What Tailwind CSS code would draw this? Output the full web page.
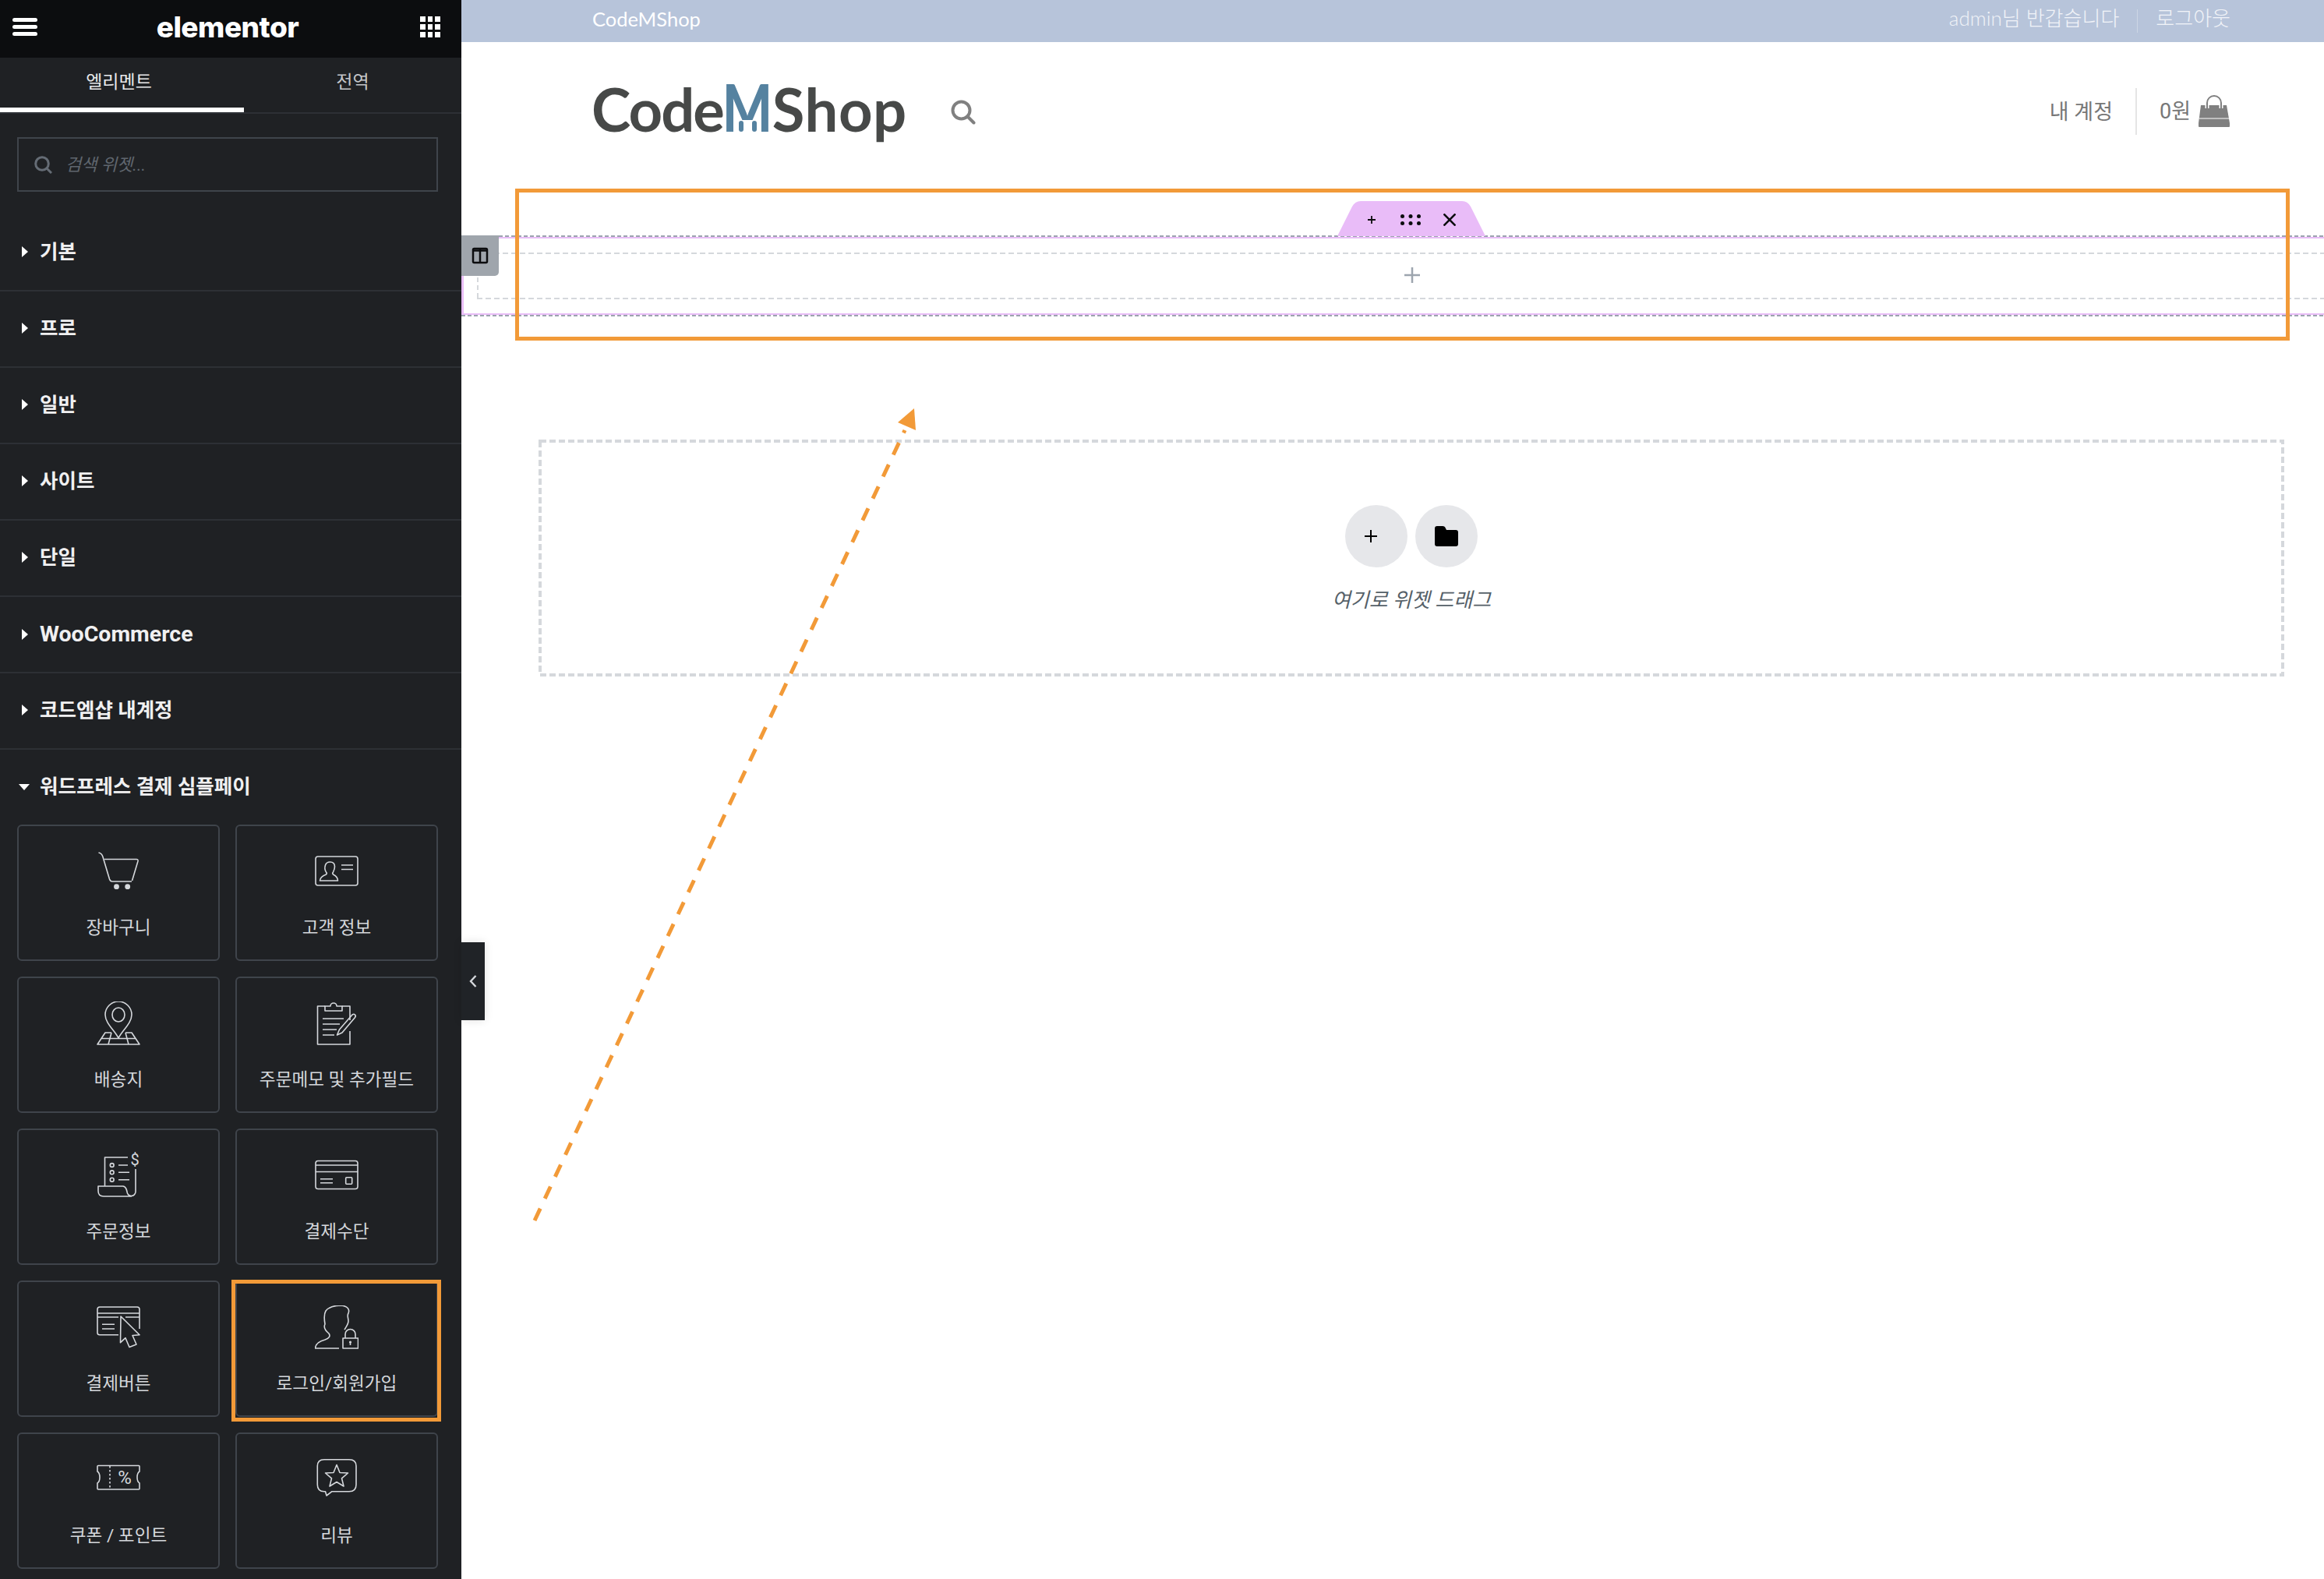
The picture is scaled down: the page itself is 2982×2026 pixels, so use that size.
<!DOCTYPE html>
<html lang="ko">
<head>
    <meta charset="UTF-8">
    <title>Elementor - CodeMShop</title>
    <script src="https://cdn.jsdelivr.net/npm/@tailwindcss/browser@4"></script>
</head>
<body class="h-[2026px] overflow-hidden bg-white font-['Roboto','Noto_Sans_CJK_KR',sans-serif]">
<div class="relative flex h-[2026px] w-[2982px] overflow-hidden">

    <!-- Editor panel -->
    <aside class="relative h-full w-[592px] shrink-0 bg-[#1f2124]">
        <div class="flex h-[74px] items-center justify-between bg-[#0c0d0f] pb-[5px] pl-[16px] pr-[27px]">
            <div class="flex w-[32px] flex-col gap-[4px]">
                <span class="h-[5px] rounded-full bg-white"></span>
                <span class="h-[5px] rounded-full bg-white"></span>
                <span class="h-[5px] rounded-full bg-white"></span>
            </div>
            <span class="-ml-[3px] font-['Inter'] text-[37px] font-extrabold leading-none tracking-[-0.5px] text-white">elementor</span>
            <div class="grid w-[26px] grid-cols-3 gap-[3px]">
                <span class="h-[7px] bg-white"></span><span class="h-[7px] bg-white"></span><span class="h-[7px] bg-white"></span>
                <span class="h-[7px] bg-white"></span><span class="h-[7px] bg-white"></span><span class="h-[7px] bg-white"></span>
                <span class="h-[7px] bg-white"></span><span class="h-[7px] bg-white"></span><span class="h-[7px] bg-white"></span>
            </div>
        </div>

        <div class="flex h-[72px] border-b-2 border-[#2d3035] text-[23px]">
            <div class="flex w-[313px] items-center justify-center border-b-[6px] border-white pr-[8px] text-[#e8e9ea]">엘리멘트</div>
            <div class="flex flex-1 items-center justify-center pb-[6px] text-[#c5c7ca]">전역</div>
        </div>

        <div class="ml-[22px] mt-[30px] flex h-[70px] w-[540px] items-center gap-[17px] border-2 border-[#3f444b] pl-[20px]">
            <svg class="h-[23px] w-[23px]" viewBox="0 0 23 23" fill="none" stroke="#656c75" stroke-width="3"><circle cx="10" cy="10" r="8.3"/><path d="M16 16l6 6"/></svg>
            <span class="text-[22px] italic text-[#5f666e]">검색 위젯...</span>
        </div>

        <div class="mt-[30px]">
            <div class="flex h-[98px] items-center gap-[15px] border-b-2 border-[#2d3035] pb-[2px] pl-[28px] text-[25.5px] font-bold text-[#f0f0f1]"><span class="h-0 w-0 border-y-[7px] border-l-[8px] border-y-transparent border-l-white"></span>기본</div>
            <div class="flex h-[98px] items-center gap-[15px] border-b-2 border-[#2d3035] pb-[2px] pl-[28px] text-[25.5px] font-bold text-[#f0f0f1]"><span class="h-0 w-0 border-y-[7px] border-l-[8px] border-y-transparent border-l-white"></span>프로</div>
            <div class="flex h-[98px] items-center gap-[15px] border-b-2 border-[#2d3035] pb-[2px] pl-[28px] text-[25.5px] font-bold text-[#f0f0f1]"><span class="h-0 w-0 border-y-[7px] border-l-[8px] border-y-transparent border-l-white"></span>일반</div>
            <div class="flex h-[98px] items-center gap-[15px] border-b-2 border-[#2d3035] pb-[2px] pl-[28px] text-[25.5px] font-bold text-[#f0f0f1]"><span class="h-0 w-0 border-y-[7px] border-l-[8px] border-y-transparent border-l-white"></span>사이트</div>
            <div class="flex h-[98px] items-center gap-[15px] border-b-2 border-[#2d3035] pb-[2px] pl-[28px] text-[25.5px] font-bold text-[#f0f0f1]"><span class="h-0 w-0 border-y-[7px] border-l-[8px] border-y-transparent border-l-white"></span>단일</div>
            <div class="flex h-[98px] items-center gap-[15px] border-b-2 border-[#2d3035] pl-[28px] text-[28.5px] font-bold text-[#f0f0f1]"><span class="h-0 w-0 border-y-[7px] border-l-[8px] border-y-transparent border-l-white"></span>WooCommerce</div>
            <div class="flex h-[98px] items-center gap-[15px] border-b-2 border-[#2d3035] pb-[2px] pl-[28px] text-[25.5px] font-bold text-[#f0f0f1]"><span class="h-0 w-0 border-y-[7px] border-l-[8px] border-y-transparent border-l-white"></span>코드엠샵 내계정</div>
            <div class="flex h-[96px] items-center gap-[13px] pb-[1px] pl-[24px] text-[25.5px] font-bold text-[#f0f0f1]"><span class="h-0 w-0 border-x-[7px] border-t-[8px] border-x-transparent border-t-white"></span>워드프레스 결제 심플페이</div>
        </div>

        <div class="ml-[22px] grid w-[540px] grid-cols-2 gap-x-[20px] gap-y-[20px] text-[22.6px] text-[#d5d8dc]">
            <div class="flex h-[175px] flex-col items-center rounded-[6px] border-2 border-[#3f444b] pt-[30px]">
                <svg class="h-[56px] w-[56px]" viewBox="0 0 56 56" fill="none" stroke="#d5d8dc" stroke-width="1.6" stroke-linejoin="round">
                    <path d="M2.5 4C5 4.5 7 6 8 9.5L16.5 38Q17.5 41 20 41H45"/><path d="M10 12.5H51Q53.5 12.5 53 15L45.5 40"/>
                    <circle cx="25.5" cy="47.7" r="3.4" fill="#d5d8dc" stroke="none"/><circle cx="39.7" cy="47.7" r="3.4" fill="#d5d8dc" stroke="none"/>
                </svg>
                <span class="mt-[28px]">장바구니</span>
            </div>
            <div class="flex h-[175px] flex-col items-center rounded-[6px] border-2 border-[#3f444b] pt-[30px]">
                <svg class="h-[56px] w-[56px]" viewBox="0 0 56 56" fill="none" stroke="#d5d8dc" stroke-width="1.6" stroke-linejoin="round">
                    <rect x="1" y="9" width="54" height="37" rx="3"/>
                    <path d="M6.5 40c0-4 3-6 8-8 1-1 1-2 0-3-2-3-2-6-1-9 1-3 3-4 6-4 4 0 6 2 6 6 0 3-1 5-2 7-1 1-1 2 0 3 4 2 6 4 6 8z"/>
                    <path d="M34 20H49M34 25.5H49"/>
                </svg>
                <span class="mt-[28px]">고객 정보</span>
            </div>
            <div class="flex h-[175px] flex-col items-center rounded-[6px] border-2 border-[#3f444b] pt-[30px]">
                <svg class="h-[56px] w-[56px]" viewBox="0 0 56 56" fill="none" stroke="#d5d8dc" stroke-width="1.6" stroke-linejoin="round">
                    <path d="M28 47C24 38 11 28 11 17a17 17 0 0 1 34 0C45 28 32 38 28 47z"/><ellipse cx="28" cy="17" rx="8" ry="9"/>
                    <path d="M19 40H11L1 55H55L45 40H37M6 47.5H50M19 40L15 55M37 40L41 55"/>
                </svg>
                <span class="mt-[28px]">배송지</span>
            </div>
            <div class="flex h-[175px] flex-col items-center rounded-[6px] border-2 border-[#3f444b] pt-[30px]">
                <svg class="h-[56px] w-[56px]" viewBox="0 0 56 56" fill="none" stroke="#d5d8dc" stroke-width="1.6" stroke-linejoin="round">
                    <path d="M13 6H3.5V55H45V38M45 24V6H35"/><path d="M13 12V6H20a4 4 0 0 1 8 0H35V12Z"/>
                    <path d="M10 22H37M10 29H32M10 36H28M10 43H25"/>
                    <path d="M28.5 43l3-7L48 17q2-1.5 3.5 0t0 3.5L35 40z"/>
                </svg>
                <span class="mt-[28px]">주문메모 및 추가필드</span>
            </div>
            <div class="flex h-[175px] flex-col items-center rounded-[6px] border-2 border-[#3f444b] pt-[30px]">
                <svg class="h-[56px] w-[56px] overflow-visible" viewBox="0 0 56 56" fill="none" stroke="#d5d8dc" stroke-width="1.6" stroke-linejoin="round">
                    <path d="M10.5 42V5H40M50 20V49a5.5 5.5 0 0 1-11 0q-1-6-5-7H2V48q0 7 7 7H45"/>
                    <circle cx="19.7" cy="15" r="2.4"/><circle cx="19.7" cy="24.3" r="2.4"/><circle cx="19.7" cy="33.7" r="2.4"/>
                    <path d="M28 15H40M28 24.3H42M28 33.7H42"/>
                    <text x="43.5" y="15" font-size="20" fill="#d5d8dc" stroke="none">$</text>
                </svg>
                <span class="mt-[28px]">주문정보</span>
            </div>
            <div class="flex h-[175px] flex-col items-center rounded-[6px] border-2 border-[#3f444b] pt-[30px]">
                <svg class="h-[56px] w-[56px]" viewBox="0 0 56 56" fill="none" stroke="#d5d8dc" stroke-width="1.6" stroke-linejoin="round">
                    <rect x="1" y="9.5" width="54" height="36" rx="3"/><path d="M1 15H55M1 23.5H55M7 32.7H23M7 37.7H23"/><rect x="39.7" y="30.7" width="8" height="8.5" rx="1"/>
                </svg>
                <span class="mt-[28px]">결제수단</span>
            </div>
            <div class="flex h-[175px] flex-col items-center rounded-[6px] border-2 border-[#3f444b] pt-[30px]">
                <svg class="h-[56px] w-[56px]" viewBox="0 0 56 56" fill="none" stroke="#d5d8dc" stroke-width="1.6" stroke-linejoin="round">
                    <path d="M28 37.7H4Q1 37.7 1 35V5Q1 2 4 2H52Q55 2 55 5V30M1 10H55M1 15H28M37 15H55M7 24.3H23M7 30H23"/>
                    <path d="M31 14L55 37.7 46 38.5 51 50 42 53.5 37 41.7 30.5 47.7z"/>
                </svg>
                <span class="mt-[28px]">결제버튼</span>
            </div>
            <div class="relative flex h-[175px] flex-col items-center rounded-[6px] border-2 border-[#3f444b] pt-[30px]">
                <svg class="h-[56px] w-[56px]" viewBox="0 0 56 56" fill="none" stroke="#d5d8dc" stroke-width="1.6" stroke-linejoin="round">
                    <path d="M31 55H.5C1 49 5 46 13 44 19 42 20 39 18 36 13 32 11 28 13 24 12 18 11 12 14 7 18 2 26 0 34 0 42 1 45 5 43 10 41 13 43 16 43 20 43 24 41 26 38 31"/>
                    <rect x="36" y="42" width="19.5" height="13"/><path d="M39 42V37a6.5 6.5 0 0 1 13 0V42"/>
                    <circle cx="45.5" cy="47" r="1.6" fill="#d5d8dc" stroke="none"/><path d="M45.5 47V51"/>
                </svg>
                <span class="mt-[28px]">로그인/회원가입</span>
                <div class="absolute -left-[7px] -top-[3px] h-[182px] w-[269px] border-[5px] border-[#f29a38]"></div>
            </div>
            <div class="flex h-[175px] flex-col items-center rounded-[6px] border-2 border-[#3f444b] pt-[30px]">
                <svg class="h-[56px] w-[56px]" viewBox="0 0 56 56" fill="none" stroke="#d5d8dc" stroke-width="1.6" stroke-linejoin="round">
                    <path d="M2 10.5H54q1 0 1 1V18q-3 2-3 7.5t3 7.5V40q0 1-1 1H2q-1 0-1-1V33q3-2 3-7.5t-3-7.5V11.5q0-1 1-1z"/>
                    <path d="M17 11V41" stroke-dasharray="2.5 2.5"/>
                    <text x="36" y="34" font-size="24" text-anchor="middle" fill="#d5d8dc" stroke="none">%</text>
                </svg>
                <span class="mt-[28px]">쿠폰 / 포인트</span>
            </div>
            <div class="flex h-[175px] flex-col items-center rounded-[6px] border-2 border-[#3f444b] pt-[30px]">
                <svg class="h-[56px] w-[56px]" viewBox="0 0 56 56" fill="none" stroke="#d5d8dc" stroke-width="1.6" stroke-linejoin="round">
                    <path d="M12 2.7H44Q53 2.7 53 11V35Q53 43.7 44 43.7H22L15 49 13.5 43.7H12Q3.3 43.7 3.3 35V11Q3.3 2.7 12 2.7z"/>
                    <path d="M28 9.5L32 19.5 42.5 20 34.5 26.8 37 37 28 31.5 19 37 21.5 26.8 13.5 20 24 19.5z"/>
                </svg>
                <span class="mt-[28px]">리뷰</span>
            </div>
        </div>

        <!-- collapse handle -->
        <div class="absolute left-[592px] top-[1209px] z-20 flex h-[100px] w-[30px] items-center justify-center bg-[#202327] shadow-[0_0_12px_rgba(0,0,0,0.12)]">
            <svg class="h-[16px] w-[10px]" viewBox="0 0 10 16" fill="none" stroke="#d5d8dc" stroke-width="2.4"><path d="M8.5 1L2 8l6.5 7"/></svg>
        </div>
    </aside>

    <!-- Site preview -->
    <main class="relative min-w-0 flex-1 bg-white">
        <div class="flex h-[54px] items-center justify-between bg-[#b7c4da] pb-[8px] pl-[168px] pr-[120px] font-['Lato','Noto_Sans_CJK_KR',sans-serif] text-[26px] text-white/80">
            <span class="pt-[2px] text-[25.5px] text-white">CodeMShop</span>
            <div class="flex items-center">
                <span class="font-light">admin님 반갑습니다</span>
                <span class="mx-[23px] mt-[8px] h-[30px] w-[1px] bg-white/30"></span>
                <span class="font-light">로그아웃</span>
            </div>
        </div>

        <div class="flex h-[178px] items-center justify-between pl-[167px] pr-[120px]">
            <div class="flex items-center">
                <div class="-mt-[12px] flex items-baseline font-['Lato'] text-[76px] font-bold leading-none text-[#474948]">
                    <span class="tracking-[-2px]">Code</span>
                    <span class="relative flex w-[63px] justify-center text-[84px] font-black text-[#5582a0]">
                        <span class="scale-x-[0.8]">M</span>
                        <span class="absolute bottom-[9px] left-[16px] h-[16px] w-[31px] bg-white"></span>
                        <span class="absolute bottom-[10px] left-[20px] h-[14px] w-[6px] rounded-full bg-[#5582a0]"></span>
                        <span class="absolute bottom-[10px] right-[20px] h-[14px] w-[6px] rounded-full bg-[#5582a0]"></span>
                    </span>
                    <span class="tracking-[0.5px]">Shop</span>
                </div>
                <svg class="ml-[56px] mt-[2px] h-[32px] w-[32px]" viewBox="0 0 32 32" fill="none" stroke="#808080" stroke-width="4"><circle cx="13.5" cy="13.5" r="11"/><path d="M21.5 21.5l8 8" stroke-linecap="round"/></svg>
            </div>
            <div class="flex items-center text-[27px] text-[#777]">
                <span class="pt-[2px]">내 계정</span>
                <span class="ml-[29px] mr-[29px] h-[60px] w-[2px] bg-[#e5e5e5]"></span>
                <span>0원</span>
                <svg class="ml-[9px] h-[42px] w-[42px]" viewBox="0 0 42 42" fill="#808080">
                    <path d="M4 13H37L41 36V40Q41 41 40 41H2Q1 41 1 40V36z"/>
                    <path d="M2 30H40" stroke="#fff" stroke-width="1"/>
                    <path d="M12 17V10a9 9 0 0 1 18 0V17" fill="none" stroke="#fff" stroke-width="5"/>
                    <path d="M12 17V10a9 9 0 0 1 18 0V17" fill="none" stroke="#808080" stroke-width="2"/>
                </svg>
            </div>
        </div>

        <!-- Empty section being edited -->
        <section class="relative mt-[70px] h-[104px]">
            <div class="h-[2px] bg-[repeating-linear-gradient(90deg,#9ca3af_0_5px,transparent_5px_8px)]"></div>
            <div class="h-[100px] border-y-2 border-l-[3px] border-[#e9bdf7] py-[18px] pl-[17px]">
                <div class="-mr-[28px] flex h-[60px] flex-col">
                    <div class="h-[2px] bg-[repeating-linear-gradient(90deg,#d5d8dc_0_7px,transparent_7px_11px)]"></div>
                    <div class="flex flex-1 items-center justify-center border-l-2 border-dashed border-[#d5d8dc] pb-[2px]">
                        <svg class="h-[20px] w-[20px]" viewBox="0 0 20 20" stroke="#9da5ae" stroke-width="2.5"><path d="M10 0V20M0 10H20"/></svg>
                    </div>
                    <div class="h-[2px] bg-[repeating-linear-gradient(90deg,#d5d8dc_0_7px,transparent_7px_11px)]"></div>
                </div>
            </div>
            <div class="h-[2px] bg-[repeating-linear-gradient(90deg,#9ca3af_0_5px,transparent_5px_8px)]"></div>

            <div class="absolute left-0 top-0 flex h-[52px] w-[48px] items-center justify-center rounded-br-[5px] bg-[#9fa5ac]">
                <svg class="h-[22px] w-[22px]" viewBox="0 0 22 22" fill="none" stroke="#0c0d0f" stroke-width="2.5"><rect x="2" y="2" width="18" height="18" rx="1.5"/><path d="M11 2V20M2 4.5H20"/></svg>
            </div>
            <div class="absolute -top-[44px] left-[1124px] flex h-[45px] w-[190px] items-center justify-center pt-[2px]">
                <svg class="absolute inset-0 h-full w-full" viewBox="0 0 190 45"><path d="M0 45L19 7Q23 0 30 0H160Q167 0 171 7L190 45z" fill="#e9bcf8"/></svg>
                <div class="relative flex items-center">
                    <svg class="h-[12px] w-[12px]" viewBox="0 0 12 12" stroke="#0c0d0f" stroke-width="1.8"><path d="M6 1V11M1 6H11"/></svg>
                    <svg class="ml-[31px] h-[14px] w-[26px]" viewBox="0 0 26 14" fill="#0c0d0f"><circle cx="2.5" cy="2.5" r="2.5"/><circle cx="13" cy="2.5" r="2.5"/><circle cx="23.5" cy="2.5" r="2.5"/><circle cx="2.5" cy="11.5" r="2.5"/><circle cx="13" cy="11.5" r="2.5"/><circle cx="23.5" cy="11.5" r="2.5"/></svg>
                    <svg class="ml-[29px] h-[16px] w-[16px]" viewBox="0 0 16 16" stroke="#0c0d0f" stroke-width="2.6"><path d="M0.5 0.5L15.5 15.5M15.5 0.5L0.5 15.5"/></svg>
                </div>
            </div>
        </section>

        <!-- Drop area -->
        <div class="relative ml-[99px] mr-[51px] mt-[158px] flex h-[304px] flex-col items-center pt-[84px]">
            <svg class="absolute inset-0 h-full w-full" viewBox="0 0 2240 304" fill="none"><rect x="2" y="2" width="2236" height="300" stroke="#d5d8dc" stroke-width="4" stroke-dasharray="8 4"/></svg>
            <div class="flex gap-[10px]">
                <div class="flex h-[80px] w-[80px] items-center justify-center rounded-full bg-[#e6e7ea] pr-[14px]">
                    <svg class="h-[16px] w-[16px]" viewBox="0 0 16 16" stroke="#000" stroke-width="2"><path d="M8 0V16M0 8H16"/></svg>
                </div>
                <div class="flex h-[80px] w-[80px] items-center justify-center rounded-full bg-[#e6e7ea]">
                    <svg class="h-[26px] w-[30px]" viewBox="0 0 30 26" fill="#000"><path d="M3 0H10Q13 0 14 3L15 5H27Q30 5 30 8V23Q30 26 27 26H3Q0 26 0 23V3Q0 0 3 0z"/></svg>
                </div>
            </div>
            <span class="mt-[23px] text-[26px] italic text-[#556068]">여기로 위젯 드래그</span>
        </div>

        <!-- Annotations -->
        <div class="absolute left-[69px] top-[242px] h-[195px] w-[2277px] border-[5px] border-[#f29a38]"></div>
        <svg class="absolute left-0 top-0 h-[2026px] w-[2390px]" viewBox="592 0 2390 2026" fill="none">
            <path d="M686 1566L1161 552" stroke="#f29a38" stroke-width="5" stroke-dasharray="17 14"/>
            <path d="M1173 524L1152 542 1175 552z" fill="#f29a38"/>
        </svg>
    </main>
</div>
</body>
</html>
